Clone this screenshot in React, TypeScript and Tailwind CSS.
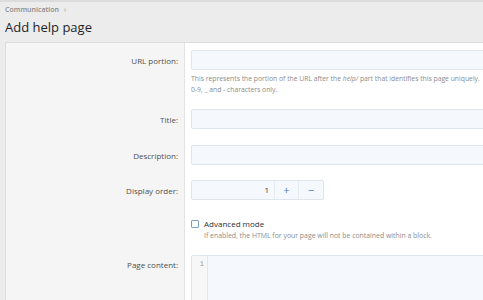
import React from "react";

const font = { fontFamily: '"Segoe UI", "Open Sans", "Noto Sans", sans-serif' };

const Label: React.FC<{ text: string; className?: string }> = ({ text, className }) => (
  <div className={`w-[179px] shrink-0 bg-[#f5f5f5] border-r border-[#e3e3e3] pr-[6px] text-right text-[8px] text-[#505050] ${className ?? ""}`}>
    {text}
  </div>
);

const Input: React.FC = () => (
  <div className="h-[20px] w-[320px] rounded-[2px] border border-[#dfe5ec] bg-[#f5f9fd]" />
);

export default function App() {
  return (
    <div className="h-[300px] w-[483px] overflow-hidden bg-[#ececec]" style={font}>
      <div className="h-[2px] bg-[#dcdcdc]" />
      <div className="px-[5px] pt-[3px]">
        <div className="flex items-center gap-[5px] text-[7px] leading-[10px] font-semibold text-[#8a8a8a]">
          <span>Communication</span>
          <span className="font-normal">›</span>
        </div>
        <h1 className="mt-[2px] text-[13px] leading-[20px] text-[#1f1f1f]">Add help page</h1>
      </div>
      <div className="ml-[5px] mt-[5px] w-[500px] border border-[#dcdcdc] bg-white">
        <div className="flex">
          <Label text="" className="h-[7px]" />
          <div />
        </div>
        {/* URL portion */}
        <div className="flex">
          <Label text="URL portion:" className="pt-[5px]" />
          <div className="pl-[6px]">
            <Input />
            <div className="mt-[3px] text-[6.8px] leading-[11px] text-[#8c8c8c]">
              This represents the portion of the URL after the <i>help/</i> part that identifies this page uniquely.
              <br />
              0-9, _ and - characters only.
            </div>
          </div>
        </div>
        <div className="flex">
          <Label text="" className="h-[14px]" />
        </div>
        <div className="flex">
          <Label text="Title:" className="pt-[5px]" />
          <div className="pl-[6px]">
            <Input />
          </div>
        </div>
        <div className="flex">
          <Label text="" className="h-[16px]" />
        </div>
        <div className="flex">
          <Label text="Description:" className="pt-[5px]" />
          <div className="pl-[6px]">
            <Input />
          </div>
        </div>
        <div className="flex">
          <Label text="" className="h-[15px]" />
        </div>
        <div className="flex">
          <Label text="Display order:" className="pt-[5px]" />
          <div className="pl-[6px]">
            <div className="flex h-[20px] w-[133px] rounded-[2px] border border-[#dfe5ec] bg-[#f5f9fd] text-[8px]">
              <div className="flex w-[82px] items-center justify-end pr-[5px] text-[#333]">1</div>
              <div className="flex w-[24px] items-center justify-center border-l border-[#e6ebf0] text-[11px] text-[#4a7fc0]">+</div>
              <div className="flex flex-1 items-center justify-center border-l border-[#e6ebf0] text-[11px] text-[#4a7fc0]">−</div>
            </div>
          </div>
        </div>
        <div className="flex">
          <Label text="" className="h-[18px]" />
        </div>
        <div className="flex">
          <Label text="" className="h-[30px]" />
          <div className="pl-[6px]">
            <div className="flex items-center gap-[5px]">
              <div className="h-[8px] w-[8px] rounded-[1px] border border-[#7c9fc8] bg-white" />
              <span className="text-[8px] leading-[11px] text-[#303030]">Advanced mode</span>
            </div>
            <div className="ml-[13px] mt-[2px] text-[6.9px] leading-[10px] text-[#8c8c8c]">
              If enabled, the HTML for your page will not be contained within a block.
            </div>
          </div>
        </div>
        <div className="flex">
          <Label text="" className="h-[7px]" />
        </div>
        <div className="flex">
          <Label text="Page content:" className="h-[60px] pt-[4px]" />
          <div className="pl-[6px]">
            <div className="flex h-[60px] w-[320px] rounded-tl-[2px] border border-[#dfe5ec] bg-[#f5f9fd]">
              <div className="w-[16px] border-r border-[#e3e8ee] bg-[#f7f7f7] pr-[3px] pt-[3px] text-right font-mono text-[7px] text-[#999]">
                1
              </div>
              <div className="flex-1" />
            </div>
          </div>
        </div>
      </div>
    </div>
  );
}
